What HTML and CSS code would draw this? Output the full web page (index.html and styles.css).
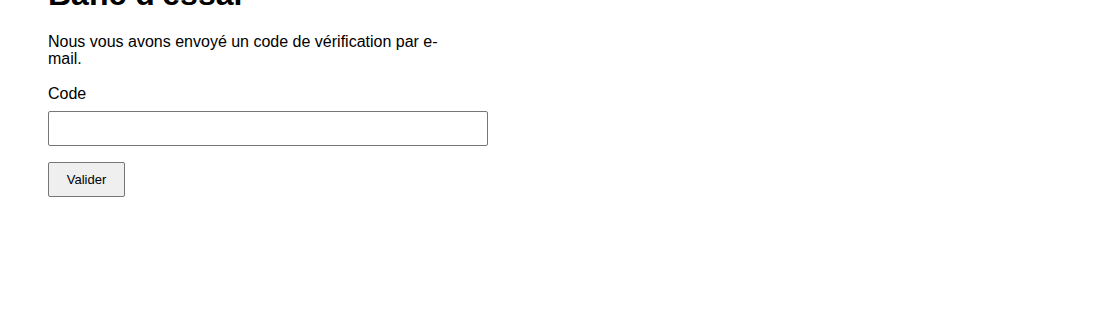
FILE: index.html
```html
<!DOCTYPE html>
<html lang="fr">
<head>
  <meta charset="UTF-8">
  <meta name="viewport" content="width=device-width, initial-scale=1">
  <title>Banc d'essai</title>
  <link rel="stylesheet" href="styles.css">
</head>
<body>

  <!-- Vérification du code -->
  <div class="verify">
    <h1>Banc d'essai</h1>
    <p class="intro">Nous vous avons envoyé un code de vérification par e-mail.</p>
    <form class="verify-form" onsubmit="return false">
      <label for="code">Code</label>
      <input type="text" id="code" name="code">
      <button type="submit">Valider</button>
    </form>
  </div>

</body>
</html>
```

FILE: styles.css
```css
* { margin: 0; padding: 0; box-sizing: border-box; }

body {
  font-family: 'Liberation Sans', Arial, sans-serif;
  background-color: white;
  color: black;
}

.verify {
  width: 440px;
  margin-left: 48px;
  margin-top: -24px;
}

.verify h1 {
  font-size: 32px;
  font-weight: bold;
  margin-bottom: 20px;
}

.intro {
  font-size: 16px;
  line-height: 17px;
  max-width: 400px;
  margin-bottom: 18px;
}

.verify-form {
  display: flex;
  flex-direction: column;
  align-items: flex-start;
}

.verify-form label {
  font-size: 16px;
  margin-bottom: 8px;
}

.verify-form input {
  width: 100%;
  height: 35px;
  border: 1px solid #767676;
  border-radius: 2px;
  padding: 0 8px;
  font-size: 16px;
  margin-bottom: 16px;
}

.verify-form button {
  width: 77px;
  height: 35px;
  background-color: #efefef;
  border: 1px solid #767676;
  border-radius: 2px;
  font-family: 'Liberation Sans', Arial, sans-serif;
  font-size: 13px;
  color: black;
}
```
